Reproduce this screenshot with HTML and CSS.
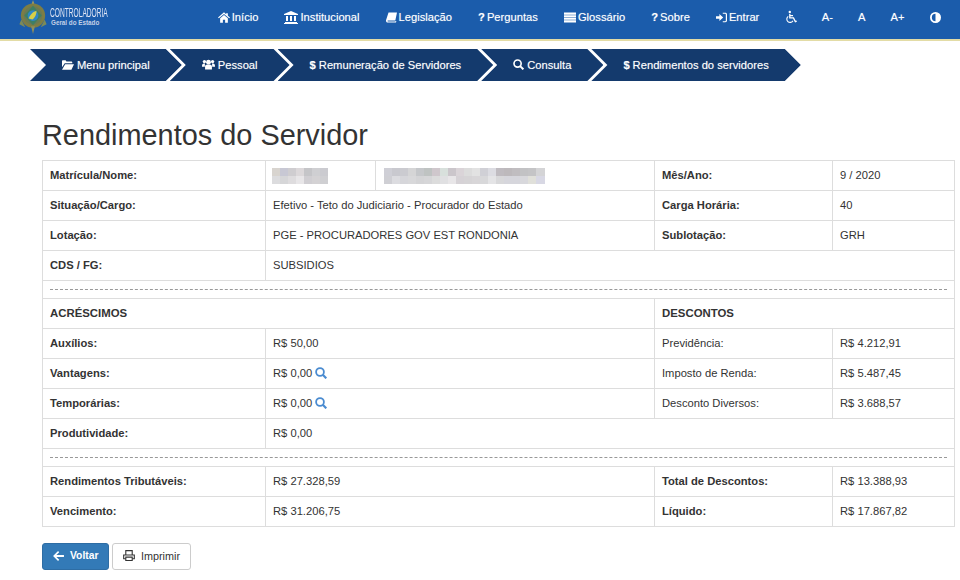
FILE: index.html
```html
<!DOCTYPE html>
<html lang="pt-BR">
<head>
<meta charset="utf-8">
<title>Rendimentos do Servidor</title>
<link rel="stylesheet" href="styles.css">
</head>
<body>
<header class="topbar">
  <a class="brand" href="#">
    <svg class="crest" viewBox="0 0 28 36" width="28" height="35">
      <path d="M14 0l2 6h-4z" fill="#a39c5e"/>
      <circle cx="14" cy="16" r="12.500" fill="#7d7d45"/>
      <circle cx="14" cy="16" r="9.500" fill="#6b7a55"/>
      <path d="M14 6l9 10-9 10-9-10z" fill="#3f7f63"/>
      <circle cx="14" cy="16" r="5.500" fill="#2f86c4"/>
      <path d="M9.500 19c2-5 5-7 8-8 .5 3-1.500 7-4 9z" fill="#d6cf48"/>
      <path d="M12 27h4l-2 8z" fill="#8f8f5c"/>
      <path d="M2 20l-2 5 6 3zM26 20l2 5-6 3z" fill="#7c8a58"/>
    </svg>
    <span class="brand-text">
      <span class="brand-main">CONTROLADORIA</span>
      <span class="brand-sub">Geral do Estado</span>
    </span>
  </a>
  <nav class="mainnav">
    <a href="#"><svg class="ico" viewBox="0 0 14 12" width="12" height="11"><path d="M7 0L0 6l1 1 6-5 6 5 1-1-2.500-2V1h-2v1.300z M2.500 7L7 3.200 11.500 7v5H8.300V8.500H5.700V12H2.500z" fill="currentColor"/></svg>Início</a>
    <a href="#"><svg class="ico" viewBox="0 0 14 13" width="14" height="13"><path d="M7 0l7 3v1H0V3z M1 11h12v1H1z M0 12h14v1H0z M2 5h2v5H2z M6 5h2v5H6z M10 5h2v5h-2z" fill="currentColor"/></svg>Institucional</a>
    <a href="#"><svg class="ico" viewBox="0 0 13 12" width="11" height="11"><path d="M3 0h10l-2 9.500H2.300C1.600 9.500 1.500 10.800 2.300 10.800H11l.3-.8 1 .3-.5 1.700H2C.3 12-.3 10.500.1 9z" fill="currentColor"/></svg>Legislação</a>
    <a href="#"><span class="glyph">?</span>Perguntas</a>
    <a href="#"><svg class="ico" viewBox="0 0 13 11" width="12" height="11"><path d="M0 0h13v2.500H0z M0 3h13v2.200H0z M0 5.700h13v2.200H0z M0 8.400h13V11H0z" fill="currentColor"/></svg>Glossário</a>
    <a href="#"><span class="glyph">?</span>Sobre</a>
    <a href="#"><svg class="ico" viewBox="0 0 13 11" width="11" height="11"><path d="M0 4h4V1.500L8.500 5.500 4 9.500V7H0z M8 0h3c1.200 0 2 .8 2 2v7c0 1.200-.8 2-2 2H8V9.800h2.800c.5 0 .8-.3.8-.8V2c0-.5-.3-.8-.8-.8H8z" fill="currentColor"/></svg>Entrar</a>
    <a class="tool" href="#" aria-label="Acessibilidade"><svg class="ico-only" viewBox="0 0 13 14" width="12" height="14" fill="none" stroke="currentColor"><circle cx="5.200" cy="1.500" r="1.300" fill="currentColor" stroke="none"/><path d="M5.200 3.500v4.500h4l2 4 1.500-.6M5.200 5.500h3.500" stroke-width="1.400"/><path d="M3.500 6.300a3.600 3.600 0 1 0 5.200 4.700" stroke-width="1.200"/></svg></a>
    <a class="tool" href="#">A-</a>
    <a class="tool" href="#">A</a>
    <a class="tool" href="#">A+</a>
    <a class="tool" href="#" aria-label="Contraste"><svg class="ico-only" viewBox="0 0 12 12" width="11" height="11"><path fill-rule="evenodd" d="M6 0a6 6 0 1 0 0 12A6 6 0 0 0 6 0zm0 2a4 4 0 0 0 0 8z" fill="currentColor"/></svg></a>
  </nav>
</header>

<ol class="crumbs">
  <li><svg class="ico" viewBox="0 0 14 11" width="12" height="10"><path d="M0 1.200C0 .5.500 0 1.200 0h3l1 1.300h5.600c.6 0 1.200.5 1.200 1.200v1H3.200L0 8z M3.700 4.500H14l-3 6.500H0z" fill="currentColor"/></svg>Menu principal</li>
  <li><svg class="ico" viewBox="0 0 14 11" width="13" height="11"><circle cx="7" cy="3" r="2.600" fill="currentColor"/><circle cx="2.600" cy="2.400" r="1.800" fill="currentColor"/><circle cx="11.400" cy="2.400" r="1.800" fill="currentColor"/><path d="M3.300 11V7.500C3.300 6 4.500 5.500 7 5.500s3.700.5 3.700 2V11zM0 7.500C0 5 1 4.500 3.200 4.500L3 8H0zM14 7.500C14 5 13 4.500 10.800 4.500L11 8h3z" fill="currentColor"/></svg>Pessoal</li>
  <li><span class="glyph">$</span>Remuneração de Servidores</li>
  <li><svg class="ico" viewBox="0 0 12 12" width="11" height="11" fill="none" stroke="currentColor" stroke-width="1.800"><circle cx="5" cy="5" r="3.900"/><path d="M7.800 7.800L11.300 11.300" stroke-width="2.200"/></svg>Consulta</li>
  <li><span class="glyph">$</span>Rendimentos do servidores</li>
</ol>

<main class="content">
  <h1 class="title">Rendimentos do Servidor</h1>
  <table class="report">
    <colgroup>
      <col class="c1"><col class="c2"><col class="c3"><col class="c4"><col class="c5">
    </colgroup>
    <tr>
      <th>Matrícula/Nome:</th>
      <td><span class="redact redact-a"></span></td>
      <td><span class="redact redact-b"></span></td>
      <th>Mês/Ano:</th>
      <td>9 / 2020</td>
    </tr>
    <tr>
      <th>Situação/Cargo:</th>
      <td colspan="2">Efetivo - Teto do Judiciario - Procurador do Estado</td>
      <th>Carga Horária:</th>
      <td>40</td>
    </tr>
    <tr>
      <th>Lotação:</th>
      <td colspan="2">PGE - PROCURADORES GOV EST RONDONIA</td>
      <th>Sublotação:</th>
      <td>GRH</td>
    </tr>
    <tr>
      <th>CDS / FG:</th>
      <td colspan="4">SUBSIDIOS</td>
    </tr>
    <tr class="sep"><td colspan="5"><hr></td></tr>
    <tr>
      <th colspan="3" class="section">ACRÉSCIMOS</th>
      <th colspan="2" class="section">DESCONTOS</th>
    </tr>
    <tr>
      <th>Auxílios:</th>
      <td colspan="2">R$ 50,00</td>
      <td>Previdência:</td>
      <td>R$ 4.212,91</td>
    </tr>
    <tr>
      <th>Vantagens:</th>
      <td colspan="2">R$ 0,00 <svg class="lens" viewBox="0 0 12 12" width="12" height="12" fill="none" stroke="currentColor" stroke-width="1.800"><circle cx="5" cy="5" r="3.900"/><path d="M7.800 7.800L11.300 11.300" stroke-width="2.200"/></svg></td>
      <td>Imposto de Renda:</td>
      <td>R$ 5.487,45</td>
    </tr>
    <tr>
      <th>Temporárias:</th>
      <td colspan="2">R$ 0,00 <svg class="lens" viewBox="0 0 12 12" width="12" height="12" fill="none" stroke="currentColor" stroke-width="1.800"><circle cx="5" cy="5" r="3.900"/><path d="M7.800 7.800L11.300 11.300" stroke-width="2.200"/></svg></td>
      <td>Desconto Diversos:</td>
      <td>R$ 3.688,57</td>
    </tr>
    <tr>
      <th>Produtividade:</th>
      <td colspan="4">R$ 0,00</td>
    </tr>
    <tr class="sep"><td colspan="5"><hr></td></tr>
    <tr>
      <th>Rendimentos Tributáveis:</th>
      <td colspan="2">R$ 27.328,59</td>
      <th>Total de Descontos:</th>
      <td>R$ 13.388,93</td>
    </tr>
    <tr>
      <th>Vencimento:</th>
      <td colspan="2">R$ 31.206,75</td>
      <th>Líquido:</th>
      <td>R$ 17.867,82</td>
    </tr>
  </table>
  <div class="actions">
    <a class="btn btn-primary" href="#"><svg class="btn-ico" viewBox="0 0 12 11" width="11" height="10"><path d="M5.500 0l1.300 1.300L3.700 4.300H12v2.400H3.700l3.100 3L5.500 11 0 5.500z" fill="currentColor"/></svg>Voltar</a>
    <a class="btn btn-default" href="#"><svg class="btn-ico" viewBox="0 0 13 12" width="12" height="11" fill="none" stroke="currentColor" stroke-width="1.200"><path d="M3 5V.7h7V5M3 9.500H.7V5.500h11.600v4H10"/><path d="M3 7.800h7v3.600H3z"/></svg>Imprimir</a>
  </div>
</main>
</body>
</html>
```
FILE: styles.css
```css
* { box-sizing: border-box; }
html, body { margin: 0; padding: 0; height: 100%; overflow: hidden; }
body {
  background: #fff;
  color: #333;
  font-family: "Liberation Sans", Arial, sans-serif;
  font-size: 11.2px;
}
a { color: inherit; text-decoration: none; }

.topbar {
  display: flex;
  align-items: center;
  justify-content: space-between;
  height: 41px;
  padding: 0 7px 5px 19px;
  background: #1b5cab;
  border-bottom: 2px solid #e3dca6;
}
.brand { display: flex; align-items: flex-start; gap: 3px; height: 39px; align-self: flex-start; }
.crest { flex: none; filter: blur(.4px); }
.brand-text { display: flex; flex-direction: column; color: #e1e6f4; width: 60px; padding-top: 7px; }
.brand-main {
  font-size: 12.500px;
  line-height: 12px;
  white-space: nowrap;
  transform: scaleX(.53);
  transform-origin: left center;
}
.brand-sub {
  font-size: 6.300px;
  font-weight: 700;
  line-height: 7px;
  white-space: nowrap;
  padding-left: 1px;
  color: #c3d0e7;
}
.mainnav { display: flex; align-items: center; color: #fff; text-shadow: 0 0 1px rgba(255, 255, 255, .45); }
.mainnav a { display: flex; align-items: center; padding: 0 13px; white-space: nowrap; }
.mainnav .tool { padding: 0 12.500px; }
.ico { flex: none; margin-right: 2px; }
.ico-only { flex: none; display: block; }
.glyph { font-weight: 700; margin-right: 2px; }

.crumbs {
  display: flex;
  list-style: none;
  margin: 8px 0;
  padding: 0 0 0 30px;
  color: #fff;
  font-size: 11.2px;
  text-shadow: 0 0 1px rgba(255, 255, 255, .45);
}
.crumbs li {
  display: flex;
  align-items: center;
  height: 32px;
  padding: 0 32px 1px;
  margin-right: -12px;
  background: #143a6d;
  white-space: nowrap;
  clip-path: polygon(0 0, calc(100% - 16px) 0, 100% 50%, calc(100% - 16px) 100%, 0 100%, 16px 50%);
}
.crumbs .ico, .crumbs .glyph { margin-right: 3px; }

.content { padding: 0 6px 0 42px; }
.title {
  margin: 38px 0 9px;
  font-size: 28.9px;
  font-weight: 400;
  line-height: 32px;
  color: #333;
}
.report {
  width: 912px;
  table-layout: fixed;
  border-collapse: collapse;
}
.c1 { width: 223px; }
.c2 { width: 110px; }
.c3 { width: 279px; }
.c4 { width: 178px; }
.c5 { width: 122px; }
.report th, .report td {
  height: 30px;
  padding: 0 7px 2px;
  border: 1px solid #ddd;
  text-align: left;
  vertical-align: middle;
  font-size: 11.2px;
  font-weight: 400;
}
.report th { font-weight: 700; }
.report .section { font-size: 11.4px; }
.report .sep td { height: 18px; padding: 0 7px; }
.sep hr { margin: 0 0 1px; border: 0; border-top: 1px dashed #999; }
.lens { color: #4a8bd0; vertical-align: -2px; }

.redact {
  display: block;
  height: 16px;
  margin-top: 2px;
  filter: blur(.6px);
  background-repeat: no-repeat;
  background-size: 100% 50%;
  background-position: 0 0, 0 100%;
}
.redact-a {
  width: 56px;
  margin-left: -1px;
  background-image:
    linear-gradient(90deg, #d8d4cf 0 8px, #c8c8d4 8px 16px, #cfcdd0 16px 24px, #dcd8da 24px 32px, #c5c5c8 32px 40px, #cfcfd2 40px 48px, #cbcbd0 48px),
    linear-gradient(90deg, #dcdcde 0 8px, #d6d6d8 8px 16px, #dedcde 16px 24px, #e8e6e8 24px 32px, #d0ced2 32px 40px, #d4d2d4 40px 48px, #cfcfd2 48px);
}
.redact-b {
  width: 161px;
  margin-left: 1px;
  background-image:
    linear-gradient(90deg, #cfcfd6 0 8px, #c9c9cf 8px 16px, #cbcbd0 16px 24px, #d5d5d6 24px 32px, #c5c7ca 32px 40px, #bfc3c2 40px 48px, #cfc7cc 48px 56px, #d8e0dc 56px 64px, #cbc6cb 64px 72px, #dad4d8 72px 80px, #dcdcdc 80px 88px, #e2e2e2 88px 96px, #d0d0d6 96px 104px, #dcdce2 104px 112px, #bfbbc0 112px 120px, #bdb9bc 120px 128px, #c0bdc0 128px 136px, #c2c2c4 136px 144px, #c4c4c6 144px 152px, #d4d4d6 152px),
    linear-gradient(90deg, #cfcfd4 0 8px, #dcdce0 8px 16px, #d6d6da 16px 24px, #d8d8da 24px 32px, #d4d4d6 32px 40px, #d6d6d8 40px 48px, #dcdcdc 48px 56px, #e0e0e2 56px 64px, #e8e6e8 64px 72px, #d6d2d6 72px 80px, #d6d4d6 80px 88px, #d8d6d8 88px 96px, #d8d8da 96px 104px, #e4e4e6 104px 112px, #d8d8da 112px 120px, #d6d6dc 120px 128px, #d6d6dc 128px 136px, #d8d8dc 136px 144px, #e0e0da 144px 152px, #d8d8e4 152px);
}

.actions { display: flex; gap: 3px; margin-top: 16px; }
.btn {
  display: flex;
  align-items: center;
  height: 27px;
  padding-bottom: 2px;
  border: 1px solid #ccc;
  border-radius: 3px;
  white-space: nowrap;
}
.btn-ico { flex: none; margin-right: 6px; }
.btn-primary {
  width: 67px;
  padding-left: 10px;
  background: #337ab7;
  border-color: #2e6da4;
  color: #fff;
  font-size: 10.3px;
  font-weight: 700;
}
.btn-default {
  width: 79px;
  padding-left: 10px;
  background: #fff;
  color: #333;
  font-size: 10.8px;
}
```
